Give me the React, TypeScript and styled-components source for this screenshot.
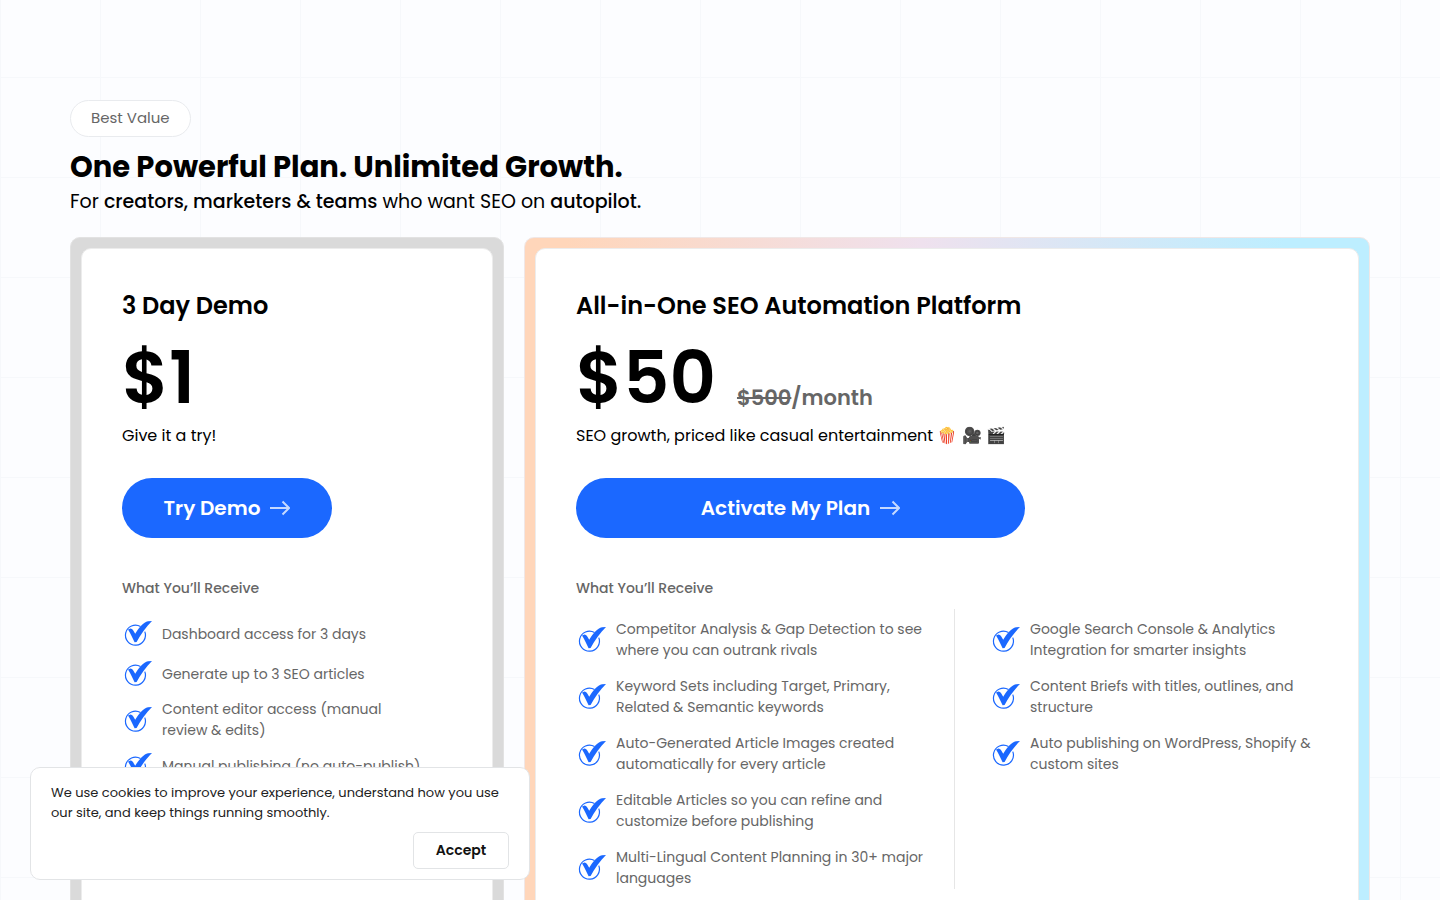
import React from "react";
import styled, { createGlobalStyle } from "styled-components";

const GlobalStyle = createGlobalStyle`
  * { box-sizing: border-box; }
  body {
    margin: 0;
    background-color: #fcfdff;
    background-image:
      linear-gradient(to right, #f6f8fb 1px, transparent 1px),
      linear-gradient(to bottom, #f6f8fb 1px, transparent 1px);
    background-size: 100px 100px;
    background-position: 0 77px;
    color: #000;
    font-family: Poppins, Inter, "Liberation Sans", sans-serif;
    overflow-x: hidden;
  }
  h1, h2, h3, p, ul { margin: 0; padding: 0; }
`;

const Page = styled.main`
  padding: 100px 70px 60px;
`;

const Pill = styled.span`
  display: inline-flex;
  align-items: center;
  height: 37px;
  padding: 0 20px 2px;
  border: 1px solid #e9ebee;
  border-radius: 20px;
  background: #fff;
  color: #666;
  font-size: 15px;
  line-height: 20px;
`;

const Heading = styled.h1`
  margin-top: 12px;
  font-size: 29px;
  font-weight: 700;
  line-height: 36px;
`;

const Lead = styled.p`
  margin-top: 1px;
  font-size: 19px;
  line-height: 32px;
  b { font-weight: 500; }
`;

const Plans = styled.div`
  display: grid;
  grid-template-columns: 434fr 846fr;
  gap: 20px;
  margin-top: 19px;
`;

const Frame = styled.section<{ $featured?: boolean }>`
  padding: 10px;
  border: 1px solid;
  border-color: ${(p) => (p.$featured ? "#f0e7e6" : "#e2e2e2")};
  border-radius: 10px;
  background: ${(p) =>
    p.$featured ? "linear-gradient(90deg, #ffd6ba 5%, #efe1ee 47%, #bdeeff 90%)" : "#dadada"};
  background-origin: border-box;
`;

const Panel = styled.div`
  height: 100%;
  padding: 40px;
  border: 1px solid #ececec;
  border-radius: 10px;
  background: #fff;
`;

const PlanName = styled.h2`
  font-size: 24px;
  font-weight: 600;
  line-height: 34px;
  white-space: nowrap;
`;

const PriceRow = styled.div`
  display: flex;
  align-items: flex-end;
  gap: 21px;
  margin-top: 10px;
`;

const Price = styled.span`
  font-size: 72px;
  font-weight: 600;
  line-height: 90px;
`;

const Period = styled.span`
  padding-bottom: 9px;
  color: #666;
  font-size: 21px;
  font-weight: 600;
  line-height: 32px;
`;

const Note = styled.p`
  font-size: 16px;
  line-height: 26px;
`;

const Cta = styled.button<{ $wide?: boolean }>`
  display: flex;
  align-items: center;
  justify-content: center;
  gap: 10px;
  width: ${(p) => (p.$wide ? "449px" : "210px")};
  max-width: 100%;
  height: 60px;
  margin-top: 29px;
  border: 0;
  border-radius: 30px;
  background: #1b68ff;
  color: #fff;
  font: inherit;
  font-size: 20px;
  font-weight: 600;
  cursor: pointer;
`;

const ListTitle = styled.h3`
  margin-top: 40px;
  color: #666;
  font-size: 14px;
  font-weight: 500;
  line-height: 20px;
`;

const Columns = styled.div<{ $split?: boolean }>`
  display: grid;
  grid-template-columns: ${(p) => (p.$split ? "379fr 363fr" : "1fr")};
  margin-top: 11px;
`;

const Features = styled.ul<{ $gap: number; $side?: "left" | "right" }>`
  display: flex;
  flex-direction: column;
  gap: ${(p) => p.$gap}px;
  padding-top: 10px;
  padding-left: ${(p) => (p.$side === "right" ? "35px" : "0")};
  padding-right: ${(p) => (p.$side === "left" ? "20px" : p.$side === "right" ? "0" : "30px")};
  border-right: ${(p) => (p.$side === "left" ? "1px solid #e6e6e6" : "0")};
  list-style: none;
`;

const Feature = styled.li`
  display: flex;
  align-items: center;
  gap: 10px;
  color: #666;
  font-size: 14px;
  line-height: 21px;
  svg { flex: none; }
`;

const Cookies = styled.aside`
  position: fixed;
  bottom: 20px;
  left: 30px;
  display: flex;
  flex-direction: column;
  gap: 9px;
  width: 500px;
  padding: 15px 20px 10px;
  border: 1px solid #e2e4e6;
  border-radius: 10px;
  background: #fff;
  color: #222;
  font-size: 13px;
  line-height: 20px;
`;

const Accept = styled.button`
  align-self: flex-end;
  width: 96px;
  height: 37px;
  padding: 0 0 2px;
  border: 1px solid #e2e4e6;
  border-radius: 5px;
  background: #fff;
  color: #111;
  font: inherit;
  font-size: 14px;
  font-weight: 600;
  cursor: pointer;
`;

const Tick = () => (
  <svg width="30" height="30" viewBox="0 0 30 30" aria-hidden="true">
    <path d="M18.500 7.500A10 10 0 1 0 22.800 12.600" fill="none" stroke="#1b68ff" strokeWidth="1.200" />
    <path d="M6 10.500 8.500 9.600C10.500 9.500 11.500 12 13.200 14.800C17 8.500 21.500 3.500 26 2.300L30 2C24 8 18.500 15.500 14.600 23L12.600 23.300C10.500 19 8.500 14.500 6 10.500Z" fill="#1b68ff" />
  </svg>
);

const Arrow = () => (
  <svg width="20" height="16" viewBox="0 0 20 16" fill="none" stroke="#fff" strokeOpacity="0.75" strokeWidth="2" aria-hidden="true">
    <path d="M0 8H19M12.500 1.500 19 8 12.500 14.500" />
  </svg>
);

const FeatureList = ({ items, gap, side }: { items: string[]; gap: number; side?: "left" | "right" }) => (
  <Features $gap={gap} $side={side}>
    {items.map((item) => (
      <Feature key={item}>
        <Tick />
        <span>{item}</span>
      </Feature>
    ))}
  </Features>
);

const demo = [
  "Dashboard access for 3 days",
  "Generate up to 3 SEO articles",
  "Content editor access (manual review & edits)",
  "Manual publishing (no auto-publish)",
];

const fullLeft = [
  "Competitor Analysis & Gap Detection to see where you can outrank rivals",
  "Keyword Sets including Target, Primary, Related & Semantic keywords",
  "Auto-Generated Article Images created automatically for every article",
  "Editable Articles so you can refine and customize before publishing",
  "Multi-Lingual Content Planning in 30+ major languages",
];

const fullRight = [
  "Google Search Console & Analytics Integration for smarter insights",
  "Content Briefs with titles, outlines, and structure",
  "Auto publishing on WordPress, Shopify & custom sites",
];

export default function App() {
  return (
    <>
      <GlobalStyle />
      <Page>
        <Pill>Best Value</Pill>
        <Heading>One Powerful Plan. Unlimited Growth.</Heading>
        <Lead>
          For <b>creators, marketers &amp; teams</b> who want SEO on <b>autopilot.</b>
        </Lead>
        <Plans>
          <Frame>
            <Panel>
              <PlanName>3 Day Demo</PlanName>
              <PriceRow>
                <Price>$1</Price>
              </PriceRow>
              <Note>Give it a try!</Note>
              <Cta type="button">
                Try Demo <Arrow />
              </Cta>
              <ListTitle>What You’ll Receive</ListTitle>
              <Columns>
                <FeatureList items={demo} gap={10} />
              </Columns>
            </Panel>
          </Frame>
          <Frame $featured>
            <Panel>
              <PlanName>All-in-One SEO Automation Platform</PlanName>
              <PriceRow>
                <Price>$50</Price>
                <Period>
                  <s>$500</s>/month
                </Period>
              </PriceRow>
              <Note>SEO growth, priced like casual entertainment 🍿 🎥 🎬</Note>
              <Cta type="button" $wide>
                Activate My Plan <Arrow />
              </Cta>
              <ListTitle>What You’ll Receive</ListTitle>
              <Columns $split>
                <FeatureList items={fullLeft} gap={15} side="left" />
                <FeatureList items={fullRight} gap={15} side="right" />
              </Columns>
            </Panel>
          </Frame>
        </Plans>
      </Page>
      <Cookies aria-label="Cookie notice">
        <p>We use cookies to improve your experience, understand how you use our site, and keep things running smoothly.</p>
        <Accept type="button">Accept</Accept>
      </Cookies>
    </>
  );
}
